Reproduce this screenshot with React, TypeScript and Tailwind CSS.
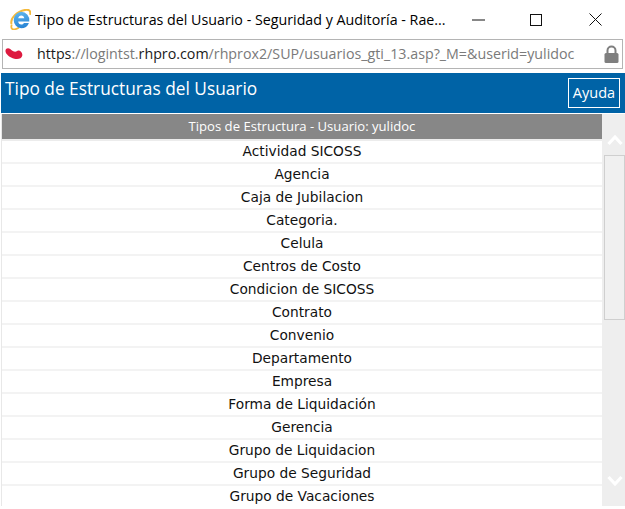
const rows = [
  "Actividad SICOSS",
  "Agencia",
  "Caja de Jubilacion",
  "Categoria.",
  "Celula",
  "Centros de Costo",
  "Condicion de SICOSS",
  "Contrato",
  "Convenio",
  "Departamento",
  "Empresa",
  "Forma de Liquidación",
  "Gerencia",
  "Grupo de Liquidacion",
  "Grupo de Seguridad",
  "Grupo de Vacaciones",
];

function IeIcon() {
  return (
    <svg width="21" height="21" viewBox="0 0 21 21" className="shrink-0">
      <defs>
        <linearGradient id="ieBlue" x1="0" y1="0" x2="0.2" y2="1">
          <stop offset="0" stopColor="#62b8ee" />
          <stop offset="1" stopColor="#2a86d6" />
        </linearGradient>
      </defs>
      <path d="M1.500 15C0 9 7 2 16 .8c3.500-.4 5 1.700 4 5" fill="none" stroke="#f4b93a" strokeWidth="2" />
      <path d="M1.800 15.500C.5 19 2 21 5 20.300c1.500-.3 3-1 4-1.800" fill="none" stroke="#f4b93a" strokeWidth="1.800" />
      <path
        d="M11 2.800a8.300 8.300 0 0 1 8.300 9.700H8.200c.2 1.900 1.500 3 3 3 1.200 0 2.100-.5 2.700-1.500h5c-1.100 3.300-4 5.300-7.700 5.300a8.300 8.300 0 0 1-.2-16.500zM8.200 9.300h6.100c-.2-1.700-1.400-2.800-3-2.800-1.700 0-2.800 1.100-3.100 2.800z"
        fill="url(#ieBlue)"
        fillRule="evenodd"
      />
    </svg>
  );
}

export default function App() {
  return (
    <div className="w-[625px] h-[509px] overflow-hidden bg-white flex flex-col font-['Open_Sans',sans-serif]">
      <div className="h-[39px] shrink-0 flex items-center">
        <div className="ml-[10px] mr-[4px] flex"><IeIcon /></div>
        <div className="w-[420px] text-[14.25px] leading-[20px] text-black whitespace-nowrap overflow-hidden">
          Tipo de Estructuras del Usuario - Seguridad y Auditoría - Rae...
        </div>
        <svg width="13" height="2" viewBox="0 0 13 2" className="ml-[17px]">
          <path d="M0 1h13" stroke="#111" strokeWidth="1" />
        </svg>
        <svg width="12" height="12" viewBox="0 0 12 12" className="ml-[45px]">
          <rect x="0.500" y="0.500" width="11" height="11" fill="none" stroke="#111" strokeWidth="1" />
        </svg>
        <svg width="13" height="13" viewBox="0 0 13 13" className="ml-[47px]">
          <path d="M0.500 0.500l12 12M12.500 0.500l-12 12" stroke="#111" strokeWidth="1" />
        </svg>
      </div>
      <div className="h-[30px] shrink-0 mx-[2px] border border-[#b4b4b4] flex items-center relative">
        <svg width="18" height="12" viewBox="0 0 18 12" className="ml-[2px]">
          <path
            d="M.5 2.500C.8 0 3.500-.3 5.500 1.200c1.600 1.200 3 2.600 4.800 2.600 1 0 1.700-1.300 3.200-1.300 2.200 0 4.200 2.700 3.800 5-.5 3-4.300 4.300-8 3.200C5 9.500 0 6 .5 2.500z"
            fill="#dd1a3f"
          />
        </svg>
        <div className="ml-[14px] text-[14.25px] leading-[20px] text-[#7a7a7a] whitespace-nowrap">
          <span className="text-[#1a1a1a]">https</span>://logintst.<span className="text-[#1a1a1a]">rhpro.com</span>/rhprox2/SUP/usuarios_gti_13.asp?_M=&amp;userid=yulidoc
        </div>
        <svg width="15" height="18" viewBox="0 0 15 18" className="absolute right-[3px] top-[5px]">
          <path d="M3.500 8V5.500a4 4 0 0 1 8 0V8" fill="none" stroke="#7f7f7f" strokeWidth="2" />
          <rect x="0.500" y="8" width="14" height="10" rx="1.500" fill="#7f7f7f" />
        </svg>
      </div>
      <div className="h-[4px] shrink-0" />
      <div className="h-[40px] shrink-0 ml-[1px] bg-[#0063a6] flex items-start justify-between">
        <div className="ml-[4px] mt-[3px] text-[17.3px] leading-[25px] text-white whitespace-nowrap">Tipo de Estructuras del Usuario</div>
        <div className="mt-[5px] mr-[5px] w-[52px] h-[30px] border border-white flex items-center justify-center text-[14.5px] text-white">Ayuda</div>
      </div>
      <div className="h-[392px] shrink-0 flex mt-[1px] overflow-hidden">
        <div className="w-[601px] ml-[1px] shrink-0 flex flex-col border-l border-[#e8e8e8]">
          <div className="h-[25px] shrink-0 bg-[#878787] flex items-center justify-center text-[13.1px] text-white">
            Tipos de Estructura - Usuario: yulidoc
          </div>
          <div className="h-[2px] shrink-0 bg-[#ececec]" />
          {rows.map((r) => (
            <div
              key={r}
              className="h-[23px] shrink-0 bg-white border-b-2 border-[#f3f3f3] flex items-center justify-center text-[13.75px] text-[#111] font-['DejaVu_Sans',sans-serif]"
            >
              {r}
            </div>
          ))}
        </div>
        <div className="flex-1 bg-[#eeeeee] flex flex-col items-end">
          <svg width="16" height="12" viewBox="0 0 16 12" className="mt-[20px] mr-[2px] shrink-0">
            <path d="M1.500 10L8 3l6.500 7" fill="none" stroke="#ffffff" strokeWidth="3.200" />
          </svg>
          <div className="w-[21px] h-[165px] mt-[9px] shrink-0 bg-[#f0f0f0] border border-[#cfcfcf]" />
          <svg width="16" height="12" viewBox="0 0 16 12" className="mt-[155px] mr-[2px] shrink-0">
            <path d="M1.500 2L8 9l6.500-7" fill="none" stroke="#ffffff" strokeWidth="3.200" />
          </svg>
        </div>
      </div>
    </div>
  );
}
